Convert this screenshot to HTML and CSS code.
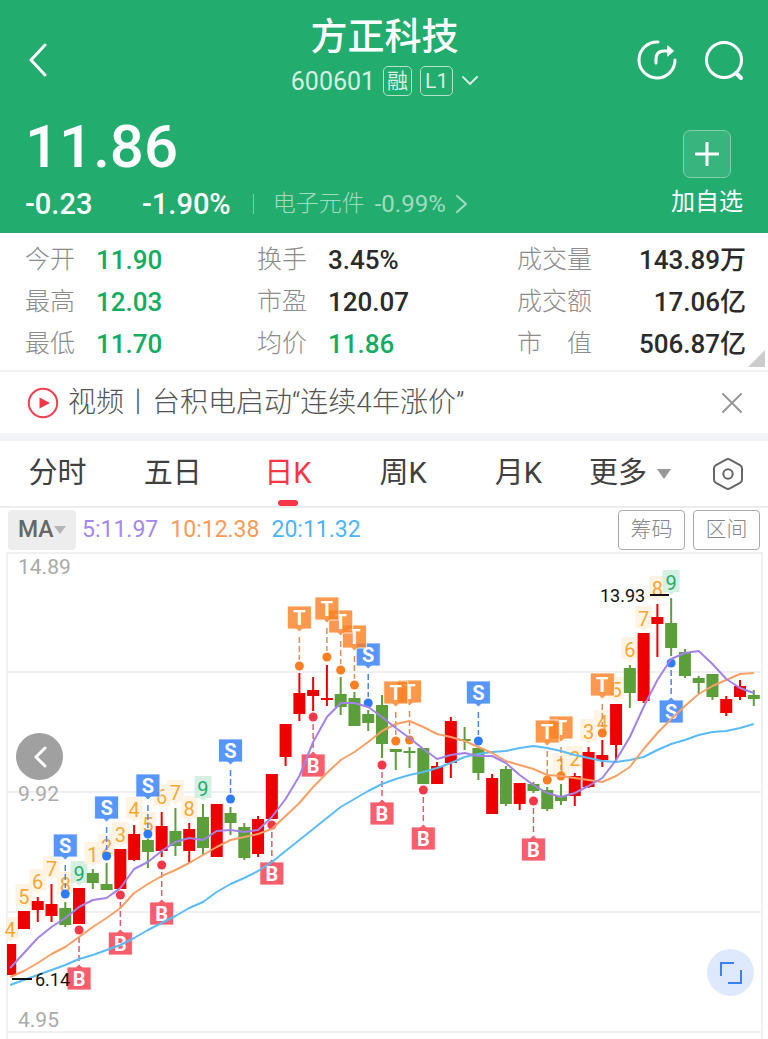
FILE: index.html
```html
<!doctype html>
<html lang="zh-CN">

<head>
    <meta charset="utf-8">
    <meta name="viewport" content="width=device-width, initial-scale=1">
    <title>方正科技 600601</title>
    <link rel="stylesheet" href="styles.css">
</head>

<body>
    <header class="head">
        <div class="top">
            <button class="icon-btn back" aria-label="返回">
                <svg width="20" height="34" viewBox="0 0 20 34"><path d="M17 2 L3 17 L17 32" /></svg>
            </button>
            <div class="name">
                <h1>方正科技</h1>
                <div class="code">
                    <span>600601</span>
                    <span class="badge">融</span>
                    <span class="badge level">L1</span>
                    <svg width="16" height="10" viewBox="0 0 16 10"><path d="M1 1 L8 8 L15 1" /></svg>
                </div>
            </div>
            <div class="actions">
                <button class="icon-btn" aria-label="分享">
                    <svg width="40" height="40" viewBox="0 0 40 40">
                        <path d="M21 2 A18 18 0 1 0 38 20" />
                        <path d="M19 23 V19 Q19 11 27 11 H33" />
                        <path class="solid" d="M31 6 L36.500 11 L31 16 Z" />
                    </svg>
                </button>
                <button class="icon-btn" aria-label="搜索">
                    <svg width="40" height="40" viewBox="0 0 40 40">
                        <circle cx="20" cy="20" r="17.5" />
                        <path d="M32 33 L37 38" stroke-width="4" />
                    </svg>
                </button>
            </div>
        </div>
        <div class="quote">
            <div>
                <div class="price">11.86</div>
                <div class="change">
                    <span class="diff">-0.23</span>
                    <span>-1.90%</span>
                    <a class="sector" href="#">
                        <span>电子元件</span>
                        <span class="rate">-0.99%</span>
                        <svg width="11" height="18" viewBox="0 0 11 18"><path d="M1 1 L10 9 L1 17" /></svg>
                    </a>
                </div>
            </div>
            <button class="add">
                <span class="plus"><svg width="24" height="24" viewBox="0 0 24 24"><path d="M12 1 V23 M1 12 H23" /></svg></span>
                加自选
            </button>
        </div>
    </header>

    <section class="stats">
        <dl>
            <div><dt>今开</dt><dd class="down">11.90</dd></div>
            <div><dt>最高</dt><dd class="down">12.03</dd></div>
            <div><dt>最低</dt><dd class="down">11.70</dd></div>
        </dl>
        <dl>
            <div><dt>换手</dt><dd>3.45%</dd></div>
            <div><dt>市盈</dt><dd>120.07</dd></div>
            <div><dt>均价</dt><dd class="down">11.86</dd></div>
        </dl>
        <dl class="right">
            <div><dt>成交量</dt><dd>143.89万</dd></div>
            <div><dt>成交额</dt><dd>17.06亿</dd></div>
            <div><dt>市　值</dt><dd>506.87亿</dd></div>
        </dl>
        <span class="corner"></span>
    </section>

    <div class="news">
        <svg width="32" height="32" viewBox="0 0 32 32">
            <circle cx="16" cy="16" r="14.2" />
            <path d="M12.500 10.500 L23 16 L12.500 21.500 Z" />
        </svg>
        <a href="#">视频丨台积电启动“连续4年涨价”</a>
        <button class="icon-btn close" aria-label="关闭">
            <svg width="20" height="20" viewBox="0 0 20 20"><path d="M1 1 L19 19 M19 1 L1 19" /></svg>
        </button>
    </div>

    <nav class="tabs">
        <button>分时</button>
        <button>五日</button>
        <button class="active">日K</button>
        <button>周K</button>
        <button>月K</button>
        <button class="more">更多<i class="tri"></i></button>
        <button class="set" aria-label="设置">
            <svg width="32" height="34" viewBox="0 0 32 34">
                <path d="M14 2.600 Q16 1.500 18 2.600 L28 8.200 Q30 9.400 30 11.500 V22.500 Q30 24.600 28 25.800 L18 31.400 Q16 32.500 14 31.400 L4 25.800 Q2 24.600 2 22.500 V11.500 Q2 9.400 4 8.200 Z" />
                <circle cx="16" cy="17" r="4.700" />
            </svg>
        </button>
    </nav>

    <div class="ma">
        <div class="pick">
            <select aria-label="指标">
                <option>MA</option>
            </select>
            <i class="tri"></i>
        </div>
        <span class="ma5">5:11.97</span>
        <span class="ma10">10:12.38</span>
        <span class="ma20">20:11.32</span>
        <div class="tools">
            <button>筹码</button>
            <button>区间</button>
        </div>
    </div>

    <main class="chart">
        <svg id="kline" viewBox="0 552 768 487"></svg>
        <button class="prev" aria-label="向前">
            <svg width="14" height="22" viewBox="0 0 14 22"><path d="M12 2 L3 11 L12 20" /></svg>
        </button>
        <button class="full" aria-label="全屏">
            <svg width="24" height="24" viewBox="0 0 24 24"><path d="M2 15 V2 H15 M22 9 V22 H9" /></svg>
        </button>
    </main>

    <script src="kline.js"></script>
</body>

</html>
```
FILE: styles.css
```css
* {
    box-sizing: border-box;
}

body {
    margin: 0;
    background: #fff;
    color: #2b2b2b;
    font-family: Roboto, "Noto Sans CJK SC", sans-serif;
    line-height: 1.4;
}

button,
select {
    margin: 0;
    padding: 0;
    border: 0;
    background: none;
    color: inherit;
    font: inherit;
    cursor: pointer;
}

a {
    color: inherit;
    text-decoration: none;
}

svg {
    display: block;
    flex: none;
    fill: none;
    stroke: currentColor;
    stroke-width: 2;
    stroke-linecap: round;
    stroke-linejoin: round;
}

h1,
dl,
dd {
    margin: 0;
}

/* header */

.head {
    padding: 16px 24px 13px 25px;
    background: #22ac6e;
    color: #fff;
}

.top {
    display: grid;
    grid-template-columns: 1fr auto 1fr;
    align-items: center;
}

.icon-btn svg {
    stroke-width: 3;
}

.back {
    justify-self: start;
    padding: 8px 3px 0;
}

.name {
    text-align: center;
}

h1 {
    font-size: 37px;
    font-weight: 500;
    line-height: 44px;
}

.code {
    display: flex;
    align-items: center;
    justify-content: center;
    height: 30px;
    margin-top: 6px;
    font-size: 25px;
    color: #d5f0e3;
}

.badge {
    height: 30px;
    margin-left: 8px;
    padding: 0 3px;
    border: 1px solid #b5e2cd;
    border-radius: 5px;
    font-size: 21px;
    line-height: 28px;
}

.level {
    padding: 0 4px;
}

.code svg {
    margin-left: 9px;
}

.actions {
    display: flex;
    justify-content: flex-end;
    gap: 27px;
    padding-top: 7px;
}

.actions .solid {
    fill: #fff;
    stroke-width: 1;
}

.quote {
    display: flex;
    justify-content: space-between;
    margin-top: 13px;
}

.price {
    font-size: 60px;
    font-weight: 500;
    line-height: 76px;
}

.change {
    display: flex;
    align-items: center;
    margin-top: 3px;
    font-size: 29px;
    font-weight: 500;
    line-height: 32px;
}

.diff {
    width: 117px;
}

.sector {
    display: flex;
    align-items: center;
    height: 20px;
    margin-left: 22px;
    padding-left: 19px;
    border-left: 1px solid #7acda8;
    font-size: 23px;
    font-weight: 300;
    color: #a1dbc1;
}

.sector span {
    margin-right: 10px;
}

.sector .rate {
    font-size: 24px;
    font-weight: 400;
}

.add {
    display: flex;
    flex-direction: column;
    align-items: center;
    margin-right: 1px;
    padding-top: 21px;
    font-size: 24px;
    line-height: 32px;
}

.plus {
    display: flex;
    align-items: center;
    justify-content: center;
    width: 48px;
    height: 48px;
    margin-bottom: 8px;
    border: 1px solid #84cfab;
    border-radius: 7px;
    background: #38b57e;
}

.plus svg {
    stroke-width: 3;
}

/* figures */

.stats {
    position: relative;
    display: grid;
    grid-template-columns: 232fr 260fr 229fr;
    padding: 6px 22px 5px 25px;
    border-bottom: 2px solid #f1f1f3;
}

.stats dl div {
    display: flex;
    line-height: 42px;
}

.stats dt {
    width: 71px;
    font-size: 25px;
    font-weight: 300;
    color: #8c8c8c;
}

.stats dd {
    font-size: 26px;
    font-weight: 500;
}

.stats .down {
    color: #12ad61;
}

.right div {
    justify-content: space-between;
}

.stats .right dt {
    width: auto;
}

.corner {
    position: absolute;
    right: 3px;
    bottom: 3px;
    border-left: 17px solid transparent;
    border-bottom: 17px solid #ccc;
}

.news {
    display: flex;
    align-items: center;
    height: 69px;
    padding: 0 26px 0 27px;
    border-bottom: 8px solid #f2f3f8;
    font-size: 28px;
    font-weight: 300;
    color: #555;
}

.news > svg {
    margin-right: 9px;
    stroke: #f5404f;
}

.news path {
    fill: #f93546;
    stroke: none;
}

.news .close {
    margin-left: auto;
    color: #999;
}

.news .close path {
    fill: none;
    stroke: currentColor;
    stroke-width: 2;
}

/* period tabs */

.tabs {
    display: grid;
    grid-template-columns: repeat(5, 15%) 1fr auto;
    height: 67px;
    border-bottom: 2px solid #ececec;
    font-size: 29px;
    color: #404040;
}

.tabs button {
    position: relative;
}

.tabs .active {
    color: #f93546;
}

.active::after {
    content: "";
    position: absolute;
    left: 50%;
    bottom: 0;
    width: 20px;
    height: 6px;
    margin-left: -10px;
    border-radius: 3px;
    background: #f93546;
}

.tri {
    border: 7px solid transparent;
    border-top: 10px solid #999;
    border-bottom: 0;
}

.tabs .more {
    display: flex;
    align-items: center;
    gap: 10px;
    padding-left: 13px;
}

.tabs .set {
    padding: 0 24px 0 0;
    color: #666;
}

/* moving averages */

.ma {
    display: flex;
    align-items: center;
    gap: 12px;
    height: 44px;
    padding: 0 8px;
    font-size: 23px;
}

.pick {
    display: flex;
    align-items: center;
    height: 40px;
    margin-right: -6px;
    padding: 0 10px;
    border-radius: 4px;
    background: #ededed;
}

.pick select {
    appearance: none;
    font-weight: 500;
    color: #666;
}

.pick .tri {
    border-width: 8px 6px 0;
    border-top-color: #b5b5b5;
}

.ma5 {
    color: #a588ee;
}

.ma10 {
    color: #fa9a56;
}

.ma20 {
    color: #4db5f5;
}

.tools {
    display: flex;
    gap: 8px;
    margin-left: auto;
}

.tools button {
    width: 67px;
    height: 40px;
    border: 1px solid #aaa;
    border-radius: 4px;
    font-size: 21px;
    font-weight: 300;
    color: #888;
}

/* chart */

.chart {
    position: relative;
}

#kline {
    width: 100%;
    stroke: none;
    stroke-linecap: butt;
}

.grid {
    stroke: #f0f0f0;
}

.axis {
    font-size: 21px;
    fill: #aaa;
}

.peak {
    font-size: 18px;
    fill: #111;
}

.peak-line {
    stroke: #111;
}

.count {
    font-size: 20px;
    text-anchor: middle;
}

.mark {
    font-size: 20px;
    font-weight: 700;
    text-anchor: middle;
    fill: #fff;
}

.prev,
.full {
    position: absolute;
    display: flex;
    align-items: center;
    justify-content: center;
    width: 47px;
    height: 47px;
    border-radius: 50%;
}

.prev {
    left: 16px;
    top: 181px;
    background: #a0a0a0;
    color: #fff;
}

.prev svg {
    stroke-width: 3;
}

.full {
    right: 14px;
    bottom: 43px;
    background: #dfe9fe;
    color: #3c80f6;
}

.full svg {
    stroke-linecap: butt;
    stroke-linejoin: miter;
}
```
FILE: kline.js
```js
var RED = "#ee0000";
var GREEN = "#5c9e3a";
var out = "";

// colour, wick top, wick bottom, body top, body bottom
var candles = [
    ["r", 944, 975, 944, 975], ["r", 911, 929, 911, 929], ["r", 897, 922, 901, 910], ["r", 884, 922, 904, 916],
    ["g", 902, 927, 908, 925], ["r", 888, 924, 888, 924], ["g", 869, 889, 873, 883], ["g", 863, 890, 884, 890],
    ["r", 849, 889, 849, 889], ["r", 825, 861, 834, 860], ["g", 839, 868, 840, 852], ["r", 812, 857, 826, 851],
    ["g", 808, 856, 831, 846], ["r", 823, 863, 829, 851], ["g", 804, 855, 817, 848], ["r", 804, 857, 804, 857],
    ["g", 807, 835, 813, 823], ["g", 823, 860, 827, 858], ["r", 816, 857, 819, 854], ["r", 774, 819, 774, 819],
    ["r", 724, 766, 724, 757], ["r", 673, 721, 693, 714], ["r", 677, 711, 690, 696], ["r", 665, 706, 698, 700],
    ["g", 677, 715, 694, 707], ["g", 692, 726, 698, 726], ["g", 710, 731, 714, 723], ["g", 695, 758, 705, 744],
    ["g", 749, 770, 749, 752], ["g", 747, 768, 751, 753], ["g", 748, 784, 748, 784], ["r", 762, 784, 766, 784],
    ["r", 717, 778, 721, 763], ["g", 727, 750, 739, 741], ["g", 748, 780, 748, 773], ["r", 774, 814, 778, 814],
    ["g", 766, 806, 769, 804], ["r", 783, 810, 783, 804], ["g", 782, 793, 784, 791], ["g", 787, 811, 790, 809],
    ["g", 784, 805, 796, 801], ["r", 773, 806, 776, 796], ["r", 747, 788, 752, 787], ["r", 740, 767, 755, 760],
    ["r", 704, 760, 704, 745], ["g", 665, 708, 668, 693], ["r", 633, 703, 633, 701], ["r", 604, 657, 617, 624],
    ["g", 598, 656, 623, 648], ["g", 649, 678, 652, 676], ["g", 676, 694, 678, 683], ["g", 674, 700, 674, 697],
    ["r", 696, 716, 699, 713], ["r", 680, 700, 686, 697], ["g", 690, 706, 695, 699]
];

var ma20 = [985, 980, 975, 970, 965, 959, 955, 950, 945, 938, 930, 923, 916, 908, 902, 892, 884, 878, 871, 862, 851, 840, 829, 818, 807, 799, 791, 784, 779, 775, 772, 768, 763, 757, 754, 752, 751, 748, 746, 748, 751, 755, 758, 761, 762, 760, 757, 750, 744, 740, 735, 732, 731, 728, 724];
var ma10 = [977, 971, 963, 954, 947, 937, 927, 918, 908, 893, 884, 876, 870, 863, 855, 847, 840, 837, 834, 829, 816, 803, 787, 773, 760, 752, 742, 731, 724, 721, 727, 734, 737, 741, 747, 753, 761, 765, 769, 775, 776, 778, 780, 782, 776, 767, 749, 733, 719, 706, 694, 686, 680, 674, 673];
var ma5 = [968, 953, 938, 927, 918, 907, 900, 898, 888, 869, 862, 851, 842, 838, 840, 831, 830, 832, 830, 817, 799, 776, 742, 717, 703, 703, 707, 717, 728, 738, 749, 759, 755, 753, 756, 756, 763, 775, 785, 793, 797, 793, 786, 778, 760, 737, 707, 680, 659, 653, 651, 664, 679, 688, 693];

// candle index, number, middle of the number
var counts = [
    [0, 4, 930], [1, 5, 897], [2, 6, 882], [3, 7, 869], [4, 8, 885], [5, 9, 874], [6, 1, 855], [7, 2, 847],
    [8, 3, 835], [9, 4, 810], [10, 5, 825], [11, 6, 797], [12, 7, 793], [13, 8, 809], [14, 9, 789],
    [40, 1, 766], [41, 2, 759], [42, 3, 732], [43, 4, 723], [44, 5, 690], [45, 6, 650], [46, 7, 619],
    [47, 8, 589], [48, 9, 583]
];

// letter, candle index, dot, 1 when the flag hangs below the dot
var marks = [
    ["S", 48, 663, 1], ["T", 43, 733, 0], ["T", 40, 776, 0], ["T", 39, 780, 0], ["B", 38, 801, 1],
    ["S", 34, 741, 0], ["B", 30, 790, 1], ["T", 29, 740, 0], ["T", 28, 741, 0], ["B", 27, 765, 1],
    ["S", 26, 703, 0], ["T", 25, 685, 0], ["T", 24, 670, 0], ["T", 23, 657, 0], ["B", 22, 717, 1],
    ["T", 21, 666, 0], ["B", 19, 825, 1], ["S", 16, 799, 0], ["B", 11, 865, 1], ["S", 10, 834, 0],
    ["B", 8, 895, 1], ["S", 7, 856, 0], ["B", 5, 930, 1], ["S", 4, 894, 0]
];

var flag = { S: "#2d7bff", T: "#fd7f22", B: "#f73648" };
var stem = { S: "#4a86e8", T: "#dc9058", B: "#d9606e" };

function x(i) {
    return 10.2 + i * 13.77;
}

function line(x1, y1, x2, y2, attrs) {
    out += '<line x1="' + x1 + '" y1="' + y1 + '" x2="' + x2 + '" y2="' + y2 + '" ' + attrs + '/>';
}

function text(tx, ty, cls, str, attrs) {
    out += '<text x="' + tx + '" y="' + ty + '" class="' + cls + '" ' + (attrs || "") + '>' + str + '</text>';
}

function average(list, color) {
    var pts = list.map(function(y, i) {
        return x(i) + "," + y;
    });
    out += '<polyline points="' + pts.join(" ") + '" stroke="' + color + '" stroke-width="2" fill="none"/>';
}

// grid
[553, 672, 792, 912, 1032].forEach(function(y) {
    line(6, y, 762, y, 'class="grid"');
});
line(7, 552, 7, 1039, 'class="grid"');
line(762, 552, 762, 1039, 'class="grid"');
text(18, 574, "axis", "14.89");
text(18, 801, "axis", "9.92");
text(18, 1027, "axis", "4.95");

counts.forEach(function(c) {
    var cx = x(c[0]);
    var top = c[2] - 13;
    var left = Math.max(cx - 8.5, 7);
    var nine = c[1] == 9;
    out += '<path d="M' + left + ' ' + top + 'H' + (cx + 8.5) + 'v22H' + (cx + 3) + 'l-3 3l-3 -3H' + left + 'Z" fill="' + (nine ? "#d5f0e2" : "#fff4e4") + '"/>';
    text(cx, c[2] + 7, "count", c[1], 'fill="' + (nine ? "#1fae6b" : "#f7a733") + '"');
});

candles.forEach(function(c, i) {
    var color = c[0] == "r" ? RED : GREEN;
    var left = Math.max(x(i) - 6, 7);
    line(x(i), c[1], x(i), c[2], 'stroke="' + color + '"');
    out += '<rect x="' + left + '" y="' + c[3] + '" width="' + (x(i) + 6 - left) + '" height="' + (c[4] - c[3]) + '" fill="' + color + '"/>';
});

marks.forEach(function(m) {
    var cx = x(m[1]);
    var y = m[2];
    var top = m[3] ? y + 37 : y - 60;
    var box = 'M' + (cx - 12) + ' ' + top;
    if (m[3]) {
        box += 'h9l3 -3l3 3h9v23h-24Z';
        line(cx, y + 7, cx, top - 4, 'stroke="' + stem[m[0]] + '" stroke-width="1.5" stroke-dasharray="6 3"');
    } else {
        box += 'h24v23h-9l-3 3l-3 -3h-9Z';
        line(cx, top + 31, cx, y - 6, 'stroke="' + stem[m[0]] + '" stroke-width="1.5" stroke-dasharray="6 3"');
    }
    out += '<circle cx="' + cx + '" cy="' + y + '" r="4.5" fill="' + flag[m[0]] + '"/>';
    out += '<path d="' + box + '" fill="' + flag[m[0]] + '" fill-opacity="0.8" stroke="#fff" stroke-width="0.8"/>';
    text(cx, top + 19, "mark", m[0]);
});

average(ma20, "#5bbcf5");
average(ma10, "#f9a066");
average(ma5, "#a482e8");

// lowest and highest price
line(12, 979, 32, 979, 'class="peak-line"');
text(35, 986, "peak", "6.14");
line(650, 595, 669, 595, 'class="peak-line"');
text(600, 602, "peak", "13.93");

document.getElementById("kline").innerHTML = out;
```
